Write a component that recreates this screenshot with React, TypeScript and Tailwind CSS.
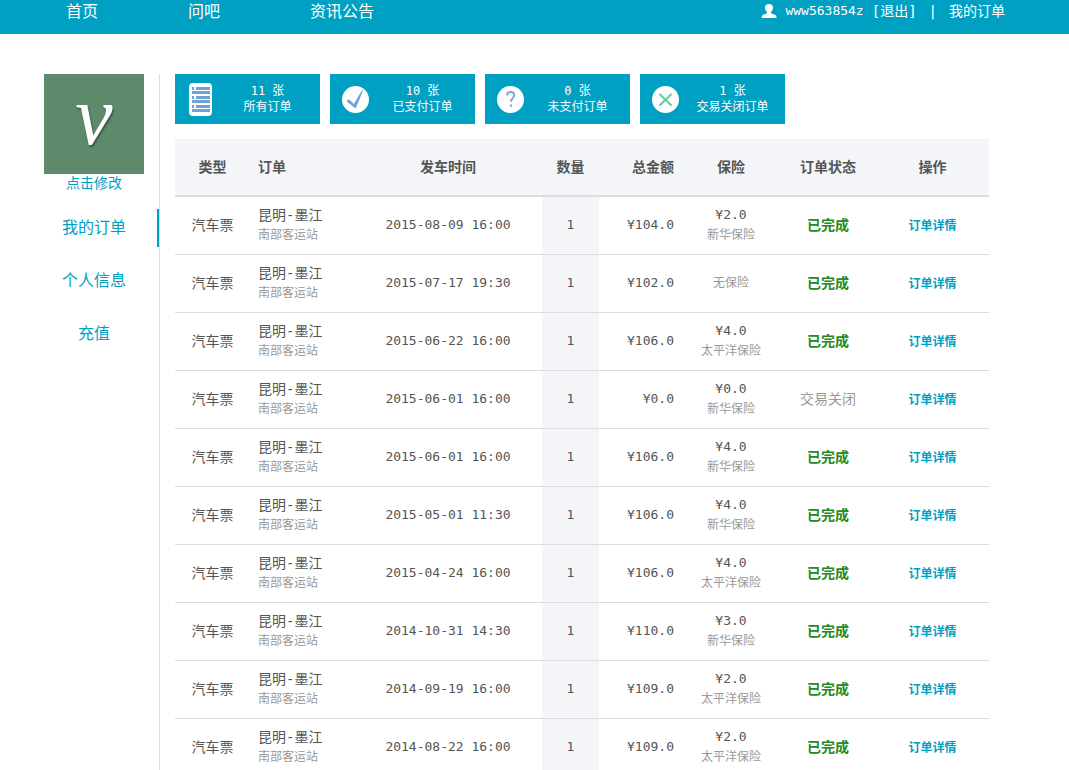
import type { ReactNode } from 'react'
import clsx from 'clsx'

type Order = {
    time: string
    amount: string
    fee?: string
    insurer: string
    closed?: boolean
}

const orders: Order[] = [
    { time: '2015-08-09 16:00', amount: '¥104.0', fee: '¥2.0', insurer: '新华保险' },
    { time: '2015-07-17 19:30', amount: '¥102.0', insurer: '无保险' },
    { time: '2015-06-22 16:00', amount: '¥106.0', fee: '¥4.0', insurer: '太平洋保险' },
    { time: '2015-06-01 16:00', amount: '¥0.0', fee: '¥0.0', insurer: '新华保险', closed: true },
    { time: '2015-06-01 16:00', amount: '¥106.0', fee: '¥4.0', insurer: '新华保险' },
    { time: '2015-05-01 11:30', amount: '¥106.0', fee: '¥4.0', insurer: '新华保险' },
    { time: '2015-04-24 16:00', amount: '¥106.0', fee: '¥4.0', insurer: '太平洋保险' },
    { time: '2014-10-31 14:30', amount: '¥110.0', fee: '¥3.0', insurer: '新华保险' },
    { time: '2014-09-19 16:00', amount: '¥109.0', fee: '¥2.0', insurer: '太平洋保险' },
    { time: '2014-08-22 16:00', amount: '¥109.0', fee: '¥2.0', insurer: '太平洋保险' },
]

const menu = ['我的订单', '个人信息', '充值']

function UserIcon() {
    return (
        <svg className="h-4 w-4" viewBox="0 0 16 16" fill="#fff" aria-hidden="true">
            <path d="M8 1c2.700 0 4.200 1.500 4 3.900-.1 1.700-.9 3-2 3.900v1.300c.6.7 2 1 3.300 1.500 1.600.5 2.200 1.200 2.200 3.400H.7c0-2.200.6-2.900 2.200-3.400 1.300-.5 2.600-.8 3.100-1.500V8.800c-1.100-.9-1.900-2.200-2-3.900C3.800 2.500 5.300 1 8 1z" />
        </svg>
    )
}

function ListIcon() {
    return (
        <svg width="28" height="34" viewBox="0 0 28 34" aria-hidden="true">
            <rect x="2" y="1" width="23" height="33" rx="4" fill="#fff" />
            <g fill="#6fa3d3">
                {[5, 14, 23].map((y) => (
                    <path key={y} d={`M5 ${y}h2v3h-2zM9 ${y}h14v3h-14z`} />
                ))}
                {[9, 18, 27].map((y) => (
                    <rect key={y} x="5" y={y} width="18" height="3" />
                ))}
            </g>
        </svg>
    )
}

function RoundIcon({ children }: { children: ReactNode }) {
    return (
        <svg width="28" height="28" viewBox="0 0 28 28" fill="none" aria-hidden="true">
            <circle cx="13.5" cy="14.5" r="13.5" fill="#fff" />
            {children}
        </svg>
    )
}

const stats = [
    { count: 11, label: '所有订单', icon: <ListIcon /> },
    {
        count: 10,
        label: '已支付订单',
        icon: (
            <RoundIcon>
                <path d="M4.500 16.200 6.800 14.200 12 19C14.500 14.500 17.500 8.500 21.500 3.500 19 10.500 16.500 17.500 13.500 23.500z" fill="#6fa3d3" />
            </RoundIcon>
        ),
    },
    {
        count: 0,
        label: '未支付订单',
        icon: (
            <RoundIcon>
                <path d="M10 10.500c0-2.300 1.400-3.600 3.600-3.600s3.600 1.300 3.600 3.300c0 2.500-3.300 3.500-3.300 6.600" stroke="#7fa6cf" strokeWidth="2" />
                <path d="M12.800 19.500h2.200v2.200h-2.200z" fill="#7fa6cf" />
            </RoundIcon>
        ),
    },
    {
        count: 1,
        label: '交易关闭订单',
        icon: (
            <RoundIcon>
                <path d="m8 9.500 11 10.500M19 9.500 8 20" stroke="#62d09c" strokeWidth="2" strokeLinecap="round" />
            </RoundIcon>
        ),
    },
]

export default function App() {
    return (
        <div className="flex h-screen flex-col overflow-hidden bg-white font-['DejaVu_Sans_Mono','Noto_Sans_CJK_SC',monospace] text-sm text-[#555]">
            <header className="flex shrink-0 items-start justify-between bg-[#00a0c2] pr-16 pb-[10px] pl-[66px] text-white">
                <nav className="flex gap-[90px] text-base leading-6">
                    <a href="#">首页</a>
                    <a href="#">问吧</a>
                    <a href="#">资讯公告</a>
                </nav>
                <div className="flex items-center leading-[22px]">
                    <UserIcon />
                    <a href="#" className="ml-2 text-[13px]">www563854z</a>
                    <a href="#" className="ml-2">[退出]</a>
                    <span className="mx-3">|</span>
                    <a href="#">我的订单</a>
                </div>
            </header>

            <div className="flex min-h-0 flex-1 pt-10 pr-20 pl-11">
                {/* Sidebar */}
                <aside className="w-[116px] shrink-0 border-r border-[#ddd] text-[#00a0c2]">
                    <div className="flex h-[100px] w-[100px] items-center justify-center bg-[#5e8a6c] pb-4 font-['Liberation_Serif',serif] text-[84px] leading-none text-white italic text-shadow-[1px_2px_2px_rgb(0_0_0/0.4)]">
                        ν
                    </div>
                    <a href="#" className="block w-[100px] text-center leading-[18px]">点击修改</a>
                    <nav className="mt-[17px] flex flex-col gap-[15px] text-base leading-[38px]">
                        {menu.map((item, i) => (
                            <a
                                key={item}
                                href="#"
                                className={clsx('border-r-2 pr-[13px] text-center', i === 0 ? 'border-[#00a0c2]' : 'border-transparent')}
                            >
                                {item}
                            </a>
                        ))}
                    </nav>
                </aside>

                <main className="min-w-0 flex-1 pl-[15px]">
                    {/* Order counts */}
                    <div className="flex gap-[10px]">
                        {stats.map((s) => (
                            <a key={s.label} href="#" className="flex h-[50px] w-[145px] items-center bg-[#00a0c2] pl-3 text-xs leading-4 text-white">
                                {s.icon}
                                <span className="flex-1 text-center">
                                    {s.count} 张
                                    <br />
                                    {s.label}
                                </span>
                            </a>
                        ))}
                    </div>

                    <table className="mt-[15px] w-full table-fixed border-collapse text-center">
                        <colgroup>
                            <col className="w-[75px]" />
                            <col className="w-[104px]" />
                            <col className="w-[188px]" />
                            <col className="w-[57px]" />
                            <col className="w-[83px]" />
                            <col className="w-[98px]" />
                            <col className="w-[96px]" />
                            <col className="w-[113px]" />
                        </colgroup>
                        <thead>
                            <tr className="h-[57px] border-b-2 border-[#ddd] bg-[#f3f5f9]">
                                <th>类型</th>
                                <th className="pl-2 text-left">订单</th>
                                <th>发车时间</th>
                                <th>数量</th>
                                <th className="pr-2 text-right">总金额</th>
                                <th>保险</th>
                                <th>订单状态</th>
                                <th>操作</th>
                            </tr>
                        </thead>
                        <tbody>
                            {orders.map((o, i) => (
                                <tr key={i} className="h-[58px] border-b border-[#ddd]">
                                    <td>汽车票</td>
                                    <td className="pl-2 text-left leading-5">
                                        昆明-墨江
                                        <div className="text-xs leading-5 text-[#999]">南部客运站</div>
                                    </td>
                                    <td className="text-[13px]">{o.time}</td>
                                    <td className="bg-[#f3f5f9] text-[13px]">1</td>
                                    <td className="pr-2 text-right text-[13px]">{o.amount}</td>
                                    <td className="text-[13px] leading-5">
                                        {o.fee}
                                        <div className="text-xs leading-5 text-[#999]">{o.insurer}</div>
                                    </td>
                                    <td>
                                        {o.closed ? (
                                            <span className="text-[#999]">交易关闭</span>
                                        ) : (
                                            <span className="font-bold text-[#228b22]">已完成</span>
                                        )}
                                    </td>
                                    <td>
                                        <a href="#" className="text-xs font-bold text-[#00a0c2]">订单详情</a>
                                    </td>
                                </tr>
                            ))}
                        </tbody>
                    </table>
                </main>
            </div>
        </div>
    )
}
